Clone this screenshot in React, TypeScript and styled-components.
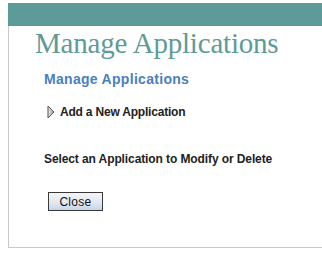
import React from 'react';
import styled, { createGlobalStyle } from 'styled-components';

const GlobalStyle = createGlobalStyle`
	html, body {
		margin: 0;
		padding: 0;
		background: #ffffff;
		overflow: hidden;
	}
`;

const Page = styled.div`
	box-sizing: border-box;
	padding: 3px 0 0 8px;
	width: 322px;
`;

const TopBar = styled.div`
	height: 23px;
	background: #5d9b98;
`;

const Panel = styled.div`
	border-left: 1px solid #c8c8c8;
	border-bottom: 1px solid #c8c8c8;
	height: 222px;
	box-sizing: border-box;
	padding: 0 0 0 26px;
	font-family: 'Liberation Sans', Arial, sans-serif;
`;

const Headline = styled.h1`
	margin: 0;
	font-family: 'Liberation Serif', 'Times New Roman', serif;
	font-weight: 400;
	font-size: 29px;
	line-height: 34px;
	letter-spacing: -0.2px;
	color: #5d9b98;
	white-space: nowrap;
`;

const Section = styled.div`
	padding: 10px 0 0 9px;
`;

const Subheading = styled.h2`
	margin: 0;
	font-size: 14px;
	font-weight: 700;
	line-height: 18px;
	letter-spacing: 0.3px;
	color: #4a7fc0;
`;

const Action = styled.div`
	display: flex;
	align-items: center;
	gap: 5px;
	margin: 17px 0 0 3px;
	font-size: 12px;
	font-weight: 700;
	color: #222222;
	line-height: 14px;
	letter-spacing: -0.2px;
`;

const Label = styled.div<{ $top: number }>`
	margin-top: ${p => p.$top}px;
	font-size: 12px;
	font-weight: 700;
	color: #222222;
	line-height: 14px;
	letter-spacing: -0.1px;
`;

const Button = styled.button`
	display: block;
	margin: 26px 0 0 4px;
	width: 55px;
	height: 19px;
	padding: 0;
	border: 1px solid #3a3a3a;
	background: linear-gradient(#f4f6f8, #dfe7f0 60%, #c5d5e6);
	font-family: 'Liberation Sans', Arial, sans-serif;
	font-size: 12px;
	color: #111111;
	letter-spacing: 0.3px;
`;

const Arrow = () => (
	<svg width='8' height='14' viewBox='0 0 8 14'>
		<defs>
			<linearGradient id='arrowFill' x1='0' y1='0' x2='1' y2='0'>
				<stop offset='0' stopColor='#e8e8e8' />
				<stop offset='1' stopColor='#9a9a9a' />
			</linearGradient>
		</defs>
		<path d='M1 1 L7 7 L1 13 Z' fill='url(#arrowFill)' stroke='#555' strokeWidth='1' strokeLinejoin='round' />
	</svg>
);

export default function App() {
	return (
		<>
			<GlobalStyle />
			<Page>
				<TopBar />
				<Panel>
					<Headline>Manage Applications</Headline>
					<Section>
						<Subheading>Manage Applications</Subheading>
						<Action>
							<Arrow />
							<span>Add a New Application</span>
						</Action>
						<Label $top={33}>Select an Application to Modify or Delete</Label>
						<Button>Close</Button>
					</Section>
				</Panel>
			</Page>
		</>
	);
}
